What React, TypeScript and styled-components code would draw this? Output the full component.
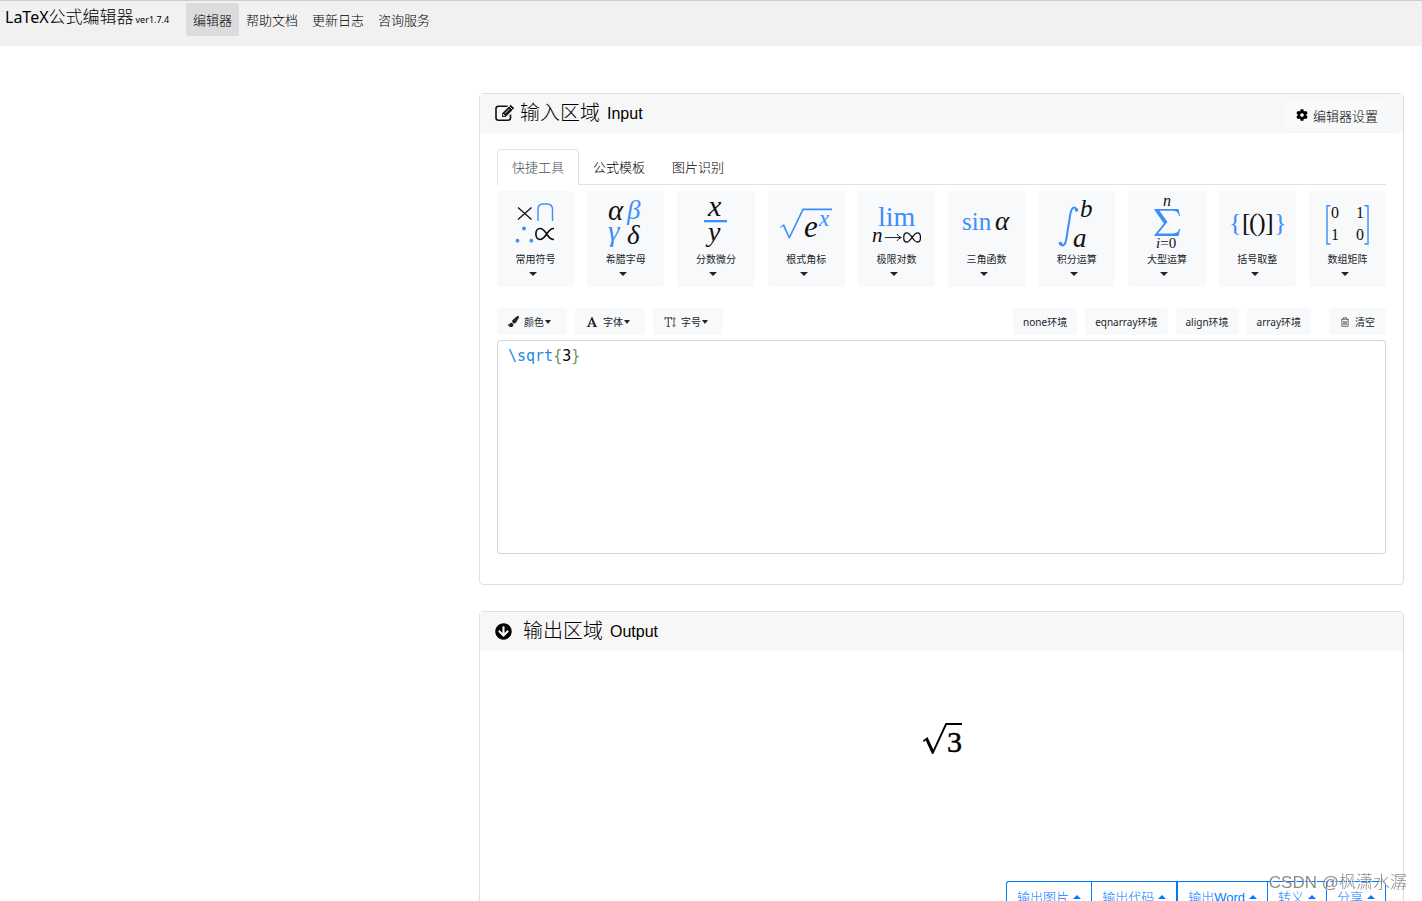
import React, { useState } from 'react';
import styled, { createGlobalStyle, css } from 'styled-components';
import { FaArrowCircleDown, FaCog, FaPaintBrush } from 'react-icons/fa';

const blue = '#3b8efb';
const link = '#007bff';
const sans = `'Noto Sans', 'Noto Sans CJK SC', sans-serif`;
const arial = `'Liberation Sans', 'Noto Sans CJK SC', sans-serif`;
const math = `'Liberation Serif', serif`;
const mono = `'DejaVu Sans Mono', monospace`;

const GlobalStyle = createGlobalStyle`
  *, *::before, *::after { box-sizing: border-box; }
  body { margin: 0; background: #fff; color: #000; font-family: ${sans}; font-weight: 300; }
  button, textarea { font: inherit; }
`;

const Page = styled.div`
  height: 100vh;
  overflow: hidden;
`;

const TopBar = styled.header`
  display: flex;
  align-items: flex-start;
  height: 46px;
  padding: 2px 5px;
  border-top: 1px solid #ccc;
  background: #f1f1f1;
`;

const Brand = styled.h1`
  display: flex;
  align-items: baseline;
  width: 181px;
  margin: 0;
  font-size: 17px;
  font-weight: 300;
  line-height: 28px;
  white-space: nowrap;
  small {
    margin-left: 2px;
    font-size: 9px;
    font-weight: 400;
  }
`;

const BrandLatin = styled.span`
  font-size: 16px;
  font-weight: 400;
`;

const Nav = styled.nav`
  display: flex;
`;

const NavLink = styled.a<{ $active?: boolean }>`
  height: 33px;
  padding: 0 7px;
  border-radius: 2px;
  background: ${p => (p.$active ? '#dcdcdc' : 'transparent')};
  color: #000;
  font-size: 13px;
  line-height: 34px;
  text-decoration: none;
`;

const Columns = styled.main`
  display: grid;
  grid-template-columns: 1fr 2fr;
  padding-top: 47px;
`;

const Workspace = styled.div`
  grid-column: 2;
  display: flex;
  flex-direction: column;
  gap: 26px;
  min-width: 0;
  padding: 0 18px 0 5px;
`;

const Card = styled.section`
  border: 1px solid #dfdfdf;
  border-radius: 4px;
`;

const CardHeader = styled.div`
  display: flex;
  align-items: center;
  justify-content: space-between;
  height: 39px;
  padding: 0 13px 1px 15px;
  background: #f7f7f7;
`;

const CardTitle = styled.h2<{ $gap: number }>`
  display: flex;
  align-items: center;
  margin: 0;
  font-size: 20px;
  font-weight: 300;
  line-height: 30px;
  svg { margin-right: ${p => p.$gap}px; }
  small {
    margin-left: 7px;
    padding-top: 2px;
    font-family: ${arial};
    font-size: 16px;
  }
`;

const soft = css`
  border: 0;
  border-radius: 3px;
  background: #f8f9fb;
  color: #212529;
  cursor: pointer;
`;

const SettingsButton = styled.button`
  ${soft}
  display: flex;
  align-items: center;
  gap: 5px;
  height: 32px;
  margin-top: 4px;
  padding: 0 12px;
  color: #000;
  font-size: 13px;
`;

const InputBody = styled.div`
  padding: 16px 17px 30px;
`;

const Tabs = styled.div`
  display: flex;
  gap: 1px;
  height: 36px;
  border-bottom: 1px solid #dee2e6;
`;

const Tab = styled.button<{ $active?: boolean }>`
  height: 36px;
  padding: 0 ${p => (p.$active ? 14 : 13)}px;
  border-style: solid;
  border-width: ${p => (p.$active ? '1px' : '1px 0')};
  border-color: ${p => (p.$active ? '#dee2e6 #dee2e6 #fff' : 'transparent')};
  border-radius: 4px 4px 0 0;
  background: ${p => (p.$active ? '#fff' : 'none')};
  color: ${p => (p.$active ? '#495057' : '#000')};
  font-size: 13px;
  line-height: 32px;
`;

const ToolGrid = styled.div`
  display: grid;
  grid-template-columns: repeat(10, 1fr);
  gap: 13px;
  margin-top: 6px;
`;

const ToolButton = styled.button`
  ${soft}
  display: flex;
  flex-direction: column;
  align-items: center;
  height: 96px;
  padding: 0;
  font-size: 10px;
  font-weight: 400;
  line-height: 16px;
`;

const Caret = styled.span<{ $up?: boolean }>`
  border-style: solid;
  border-color: ${p => (p.$up ? 'transparent transparent currentColor' : 'currentColor transparent transparent')};
  border-width: ${p => (p.$up ? '0 4px 4px' : '4px 4px 0')};
`;

const CaretRow = styled.span`
  display: flex;
  align-items: center;
  height: 13px;
  padding-right: 5px;
`;

const Toolbar = styled.div`
  display: flex;
  gap: 8px;
  margin: 21px 0 5px;
`;

const SmallButton = styled.button<{ $lead?: boolean; $apart?: boolean }>`
  ${soft}
  display: flex;
  align-items: center;
  height: 27px;
  padding: 0 ${p => (p.$apart ? 11 : 10)}px;
  margin-left: ${p => (p.$lead ? 'auto' : p.$apart ? '10px' : '0')};
  font-size: 10px;
  font-weight: 400;
  svg { margin-right: 5px; }
`;

const MenuButton = styled(SmallButton)`
  width: 70px;
  padding: 0 11px;
  ${Caret} { margin-left: 1px; border-width: 4px 3px 0; }
`;

const Editor = styled.div`
  display: grid;
  height: 214px;
  border: 1px solid #ced4da;
  border-radius: 3px;
  font-family: ${mono};
  font-size: 15px;
  font-weight: 400;
  line-height: 20px;
`;

const Highlight = styled.pre`
  grid-area: 1 / 1;
  margin: 0;
  padding: 5px 10px;
  font: inherit;
  white-space: pre-wrap;
  overflow: hidden;
`;

const Source = styled.textarea`
  grid-area: 1 / 1;
  padding: 5px 10px;
  border: 0;
  outline: 0;
  resize: none;
  background: none;
  color: transparent;
  caret-color: #000;
`;

const Token = styled.span<{ $kind: string }>`
  color: ${p => (p.$kind === 'command' ? '#1e88e5' : p.$kind === 'brace' ? '#6f9060' : '#000')};
`;

const Preview = styled.div`
  display: flex;
  align-items: center;
  justify-content: center;
  height: 176px;
`;

const ExportRow = styled.div`
  display: flex;
  justify-content: flex-end;
  padding: 54px 17px 17px;
`;

const ExportButton = styled.button`
  display: flex;
  align-items: center;
  gap: 4px;
  height: 33px;
  padding: 0 10px 2px;
  border: 1px solid ${link};
  border-right-width: 0;
  background: #fff;
  color: ${link};
  font-family: ${arial};
  font-size: 13px;
  white-space: nowrap;
  &:first-child { border-radius: 3px 0 0 3px; }
  &:nth-child(3) { border-left-width: 2px; }
  &:last-child { border-right-width: 1px; border-radius: 0 3px 3px 0; }
`;

const Watermark = styled.div`
  position: fixed;
  right: 15px;
  bottom: 4px;
  color: rgba(120, 120, 120, 0.85);
  font-family: ${arial};
  font-size: 17px;
  line-height: 28px;
  text-shadow: 1px 1px 0 #fff;
  pointer-events: none;
`;

const Drawing = styled.svg`
  display: block;
  width: 77px;
  height: 60px;
  overflow: visible;
  text { font-family: ${math}; fill: #111; }
  .it { font-style: italic; }
  .blue { fill: ${blue}; }
`;

const drawings: Record<string, React.ReactNode> = {
  常用符号: (
    <>
      <path d="M21 16.500L34.500 28.500M34.500 16.500L21 28.500" stroke="#111" strokeWidth="1.300" fill="none" />
      <path d="M41 30V18.500Q41 13 46 13H50Q55.500 13 55.500 18.500V30" stroke={blue} strokeWidth="1.400" fill="none" />
      <g fill={blue}><circle cx="27" cy="37.500" r="1.900" /><circle cx="20.500" cy="49.700" r="1.900" /><circle cx="34.300" cy="49.700" r="1.900" /></g>
      <path d="M57 37.500C50 37 49.500 48.500 43 48.500C37.500 48.500 37.500 37.500 43 37.500C49.500 37.500 50 49 57 48.500" stroke="#111" strokeWidth="1.700" fill="none" />
    </>
  ),
  希腊字母: (
    <>
      <text className="it" x="21" y="29" fontSize="29">α</text>
      <text className="it blue" x="40" y="28" fontSize="27">β</text>
      <text className="it blue" x="21" y="50" fontSize="29">γ</text>
      <text className="it" x="40" y="53" fontSize="27">δ</text>
    </>
  ),
  分数微分: (
    <>
      <text className="it" x="31" y="25" fontSize="30">x</text>
      <rect x="27" y="29" width="23" height="2.300" fill={blue} />
      <text className="it" x="31" y="50" fontSize="28">y</text>
    </>
  ),
  根式角标: (
    <>
      <path d="M12 36L16 33L21.300 45L34.500 17.500H64V19.300H35.500L21.800 47.500H20.800L15 35L12.700 36.800Z" fill={blue} />
      <text className="it" x="36" y="46" fontSize="31">e</text>
      <text className="it blue" x="51" y="35" fontSize="23">x</text>
    </>
  ),
  极限对数: (
    <>
      <text className="blue" x="20" y="35" fontSize="28">lim</text>
      <text className="it" x="14" y="51" fontSize="21">n</text>
      <path d="M27 46.500H43M39 43Q40.500 46 43.500 46.500Q40.500 47 39 50" stroke="#111" strokeWidth="0.900" fill="none" />
      <path d="M54.200 46.500C51.500 42.500 50 41.800 48.800 41.800C44.700 41.800 44.700 51 48.800 51C52.500 51 55.500 41.800 59.500 41.800C63.500 41.800 63.500 51 59.500 51C57.500 51 56 49.500 54.200 46.500Z" stroke="#111" strokeWidth="1.300" fill="none" />
    </>
  ),
  三角函数: (
    <>
      <text className="blue" x="14" y="39" fontSize="25">sin</text>
      <text className="it" x="47" y="39" fontSize="27">α</text>
    </>
  ),
  积分运算: (
    <>
      <path d="M39 18.500C35.500 14 33 18 32 25L28.500 47C27.500 54 25 56 22 53" stroke={blue} strokeWidth="2" fill="none" />
      <circle cx="38.500" cy="19" r="1.800" fill={blue} /><circle cx="22.500" cy="52.500" r="1.800" fill={blue} />
      <text className="it" x="42" y="26" fontSize="25">b</text>
      <text className="it" x="35" y="56" fontSize="27">a</text>
    </>
  ),
  大型运算: (
    <>
      <text className="it" x="35" y="15" fontSize="16">n</text>
      <path d="M26.500 18H50.500L52 25H51C50 20.500 48 19.800 43 19.800H31.500L39.500 31L30 42.500H43C48.500 42.500 50 41.500 51.200 38H52.200L50.500 45H26.500V44L35.800 32.500L26.500 19Z" fill={blue} />
      <text x="28" y="57" fontSize="15"><tspan className="it">i</tspan>=0</text>
    </>
  ),
  括号取整: (
    <>
      <text className="blue" x="10" y="40" fontSize="26">{'{'}</text>
      <text x="23" y="40" fontSize="26">[</text>
      <text x="30" y="40" fontSize="26">(</text>
      <text x="38" y="40" fontSize="26">)</text>
      <text x="46" y="40" fontSize="26">]</text>
      <text className="blue" x="55" y="40" fontSize="26">{'}'}</text>
    </>
  ),
  数组矩阵: (
    <>
      <path d="M21.500 14.700H18V53H21.500M55.500 14.700H59V53H55.500" stroke={blue} strokeWidth="1.400" fill="none" />
      <text x="22" y="27" fontSize="16">0</text><text x="47" y="27" fontSize="16">1</text>
      <text x="22" y="49" fontSize="16">1</text><text x="47" y="49" fontSize="16">0</text>
    </>
  ),
};

const EditIcon = () => (
  <svg width="20" height="20" viewBox="0 0 20 20" fill="none">
    <path d="M15.500 11.500V15Q15.500 17.200 13 17.200H3.500Q1 17.200 1 15V5.500Q1 3.200 3.500 3.200H12.500" stroke="#111" strokeWidth="1.600" />
    <path d="M7 14V10.500L15.700 1.800L19.200 5.300L10.500 14Z" fill="#111" />
    <path d="M8.300 11V12.700H10M14.300 3.300L17.700 6.700M10 10.500L14.500 6" stroke="#f7f7f7" strokeWidth="0.900" />
  </svg>
);

const FontIcon = () => (
  <svg width="12" height="12" viewBox="0 0 12 12">
    <path fillRule="evenodd" d="M5.600 1H6.400L10.100 9.800Q10.400 10.400 11.200 10.500V11H6.800V10.500Q8 10.400 7.700 9.600L7.200 8.200H3.800L3.300 9.500Q3 10.400 4.300 10.500V11H.8V10.500Q1.600 10.300 2 9.500ZM5.400 3.800L4.100 7.400H6.900Z" fill="#212529" />
  </svg>
);

const TextHeightIcon = () => (
  <svg width="12" height="12" viewBox="0 0 12 12" fill="none" stroke="#444">
    <path d="M1 3.500V1.700H7.500V3.500M4.300 1.700V10.300M2.800 10.500H5.800" strokeWidth="1.100" />
    <path d="M10 2V10M8.600 3.300L10 1.500L11.400 3.300M8.600 8.900L10 10.700L11.400 8.900" strokeWidth="0.900" />
  </svg>
);

const TrashIcon = () => (
  <svg width="10" height="10" viewBox="0 0 10 10" fill="none" stroke="#444" strokeWidth="0.800">
    <path d="M1 2.300H9M3.400 2V.8H6.600V2M1.900 2.500V9.300H8.100V2.500M3.800 4V8M5 4V8M6.200 4V8" />
  </svg>
);

const RootThree = () => (
  <svg width="42" height="36" viewBox="0 0 42 36" role="img" aria-label="√3">
    <path d="M2 19.500L6.500 16L12.300 28.500L24.500 2H41V4H25.700L12.300 33H11L4.800 19.500L2.600 21Z" fill="#000" />
    <text x="26" y="31" fontSize="30" fontFamily="Liberation Serif, serif" stroke="#000" strokeWidth="0.500">3</text>
  </svg>
);

const tokenize = (source: string) =>
  (source.match(/\\[a-zA-Z]+|[{}]|[^\\{}]+|\\/g) || []).map(text => ({
    text,
    kind: /^\\[a-zA-Z]/.test(text) ? 'command' : /^[{}]$/.test(text) ? 'brace' : 'plain',
  }));

const navItems = ['编辑器', '帮助文档', '更新日志', '咨询服务'];
const tabs = ['快捷工具', '公式模板', '图片识别'];
const menus = [
  { label: '颜色', icon: <FaPaintBrush size={11} /> },
  { label: '字体', icon: <FontIcon /> },
  { label: '字号', icon: <TextHeightIcon /> },
];
const environments = ['none环境', 'eqnarray环境', 'align环境', 'array环境'];
const exportsList = ['输出图片', '输出代码', '输出Word', '转义', '分享'];

export default function App() {
  const [source, setSource] = useState('\\sqrt{3}');
  const [tab, setTab] = useState(0);

  return (
    <Page lang="zh-CN">
      <GlobalStyle />
      <TopBar>
        <Brand><BrandLatin>LaTeX</BrandLatin>公式编辑器<small>ver1.7.4</small></Brand>
        <Nav>
          {navItems.map((item, i) => (
            <NavLink key={item} href="#" $active={i === 0}>{item}</NavLink>
          ))}
        </Nav>
      </TopBar>
      <Columns>
        <Workspace>
          <Card>
            <CardHeader>
              <CardTitle $gap={5}><EditIcon />输入区域<small>Input</small></CardTitle>
              <SettingsButton><FaCog size={12} />编辑器设置</SettingsButton>
            </CardHeader>
            <InputBody>
              <Tabs role="tablist">
                {tabs.map((name, i) => (
                  <Tab key={name} role="tab" aria-selected={tab === i} $active={tab === i} onClick={() => setTab(i)}>{name}</Tab>
                ))}
              </Tabs>
              <ToolGrid>
                {Object.entries(drawings).map(([name, drawing]) => (
                  <ToolButton key={name}>
                    <Drawing viewBox="0 0 77 60" aria-hidden="true">{drawing}</Drawing>
                    {name}
                    <CaretRow><Caret /></CaretRow>
                  </ToolButton>
                ))}
              </ToolGrid>
              <Toolbar>
                {menus.map(m => (
                  <MenuButton key={m.label}>{m.icon}{m.label}<Caret /></MenuButton>
                ))}
                {environments.map((name, i) => (
                  <SmallButton key={name} $lead={i === 0}>{name}</SmallButton>
                ))}
                <SmallButton $apart><TrashIcon />清空</SmallButton>
              </Toolbar>
              <Editor>
                <Highlight aria-hidden="true">
                  {tokenize(source).map((t, i) => <Token key={i} $kind={t.kind}>{t.text}</Token>)}
                </Highlight>
                <Source aria-label="LaTeX" spellCheck={false} value={source} onChange={e => setSource(e.target.value)} />
              </Editor>
            </InputBody>
          </Card>
          <Card>
            <CardHeader>
              <CardTitle $gap={11}><FaArrowCircleDown size={17} />输出区域<small>Output</small></CardTitle>
            </CardHeader>
            <Preview><RootThree /></Preview>
            <ExportRow>
              {exportsList.map(name => (
                <ExportButton key={name}>{name}<Caret $up /></ExportButton>
              ))}
            </ExportRow>
          </Card>
        </Workspace>
      </Columns>
      <Watermark>CSDN @枫潇水潺</Watermark>
    </Page>
  );
}
